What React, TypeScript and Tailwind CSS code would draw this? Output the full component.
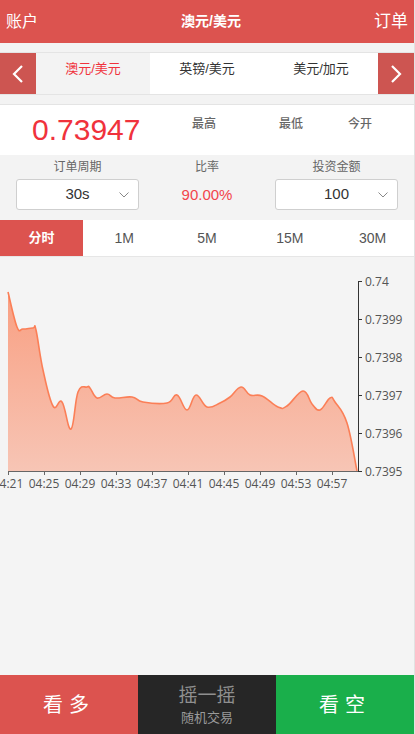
import React from 'react';

const FONT = { fontFamily: '"Liberation Sans", "Noto Sans CJK SC", sans-serif' };

const points: [number, number][] = [
  [8, 292], [17, 327], [23, 329], [33, 328], [36, 330], [43, 370], [53, 406], [62, 402],
  [71, 429], [78, 392], [87, 387], [90, 388], [97, 398], [107, 394], [115, 398], [132, 397],
  [143, 402], [167, 403], [177, 395], [187, 410], [196, 395], [207, 407], [220, 403],
  [230, 397], [241, 387], [250, 395], [262, 396], [278, 407], [287, 406], [303, 391],
  [312, 404], [320, 410], [330, 398], [335, 402], [347, 423], [357, 471],
];

function smoothPath(pts: [number, number][]): string {
  let d = `M${pts[0][0]},${pts[0][1]}`;
  for (let i = 0; i < pts.length - 1; i++) {
    const p0 = pts[i - 1] || pts[i];
    const p1 = pts[i];
    const p2 = pts[i + 1];
    const p3 = pts[i + 2] || p2;
    const t = 0.2;
    const c1x = p1[0] + (p2[0] - p0[0]) * t;
    const c1y = p1[1] + (p2[1] - p0[1]) * t;
    const c2x = p2[0] - (p3[0] - p1[0]) * t;
    const c2y = p2[1] - (p3[1] - p1[1]) * t;
    d += ` C${c1x},${c1y} ${c2x},${c2y} ${p2[0]},${p2[1]}`;
  }
  return d;
}

const yTicks = ['0.74', '0.7399', '0.7398', '0.7397', '0.7396', '0.7395'];
const xTicks = ['04:21', '04:25', '04:29', '04:33', '04:37', '04:41', '04:45', '04:49', '04:53', '04:57'];

function Chart() {
  const line = smoothPath(points);
  const area = `${line} L357,471 L8,471 Z`;
  return (
    <svg width="415" height="418" className="block" style={{ fontFamily: '"Open Sans", "Liberation Sans", sans-serif' }}>
      <defs>
        <linearGradient id="fill" x1="0" y1="281" x2="0" y2="471" gradientUnits="userSpaceOnUse">
          <stop offset="0" stopColor="#f99d7f" />
          <stop offset="1" stopColor="#f7c5b5" />
        </linearGradient>
      </defs>
      <g transform="translate(0,-257)">
        <path d={area} fill="url(#fill)" />
        <path d={line} fill="none" stroke="#fb7f57" strokeWidth="1.6" />
        <line x1="358.5" y1="281" x2="358.5" y2="471" stroke="#333" strokeWidth="1" />
        {yTicks.map((t, i) => (
          <g key={t}>
            <line x1="358" y1={281.5 + i * 38} x2="362" y2={281.5 + i * 38} stroke="#333" />
            <text x="365" y={285.5 + i * 38} fontSize="12" fill="#555">{t}</text>
          </g>
        ))}
        <line x1="8" y1="471.5" x2="358" y2="471.5" stroke="#666" />
        {xTicks.map((t, i) => (
          <g key={t}>
            <line x1={8.5 + i * 36} y1="471" x2={8.5 + i * 36} y2="475" stroke="#666" />
            <text x={8 + i * 36} y="488" fontSize="12" fill="#555" textAnchor="middle">{t}</text>
          </g>
        ))}
      </g>
    </svg>
  );
}

function Chevron({ dir }: { dir: 'left' | 'right' }) {
  return (
    <svg width="12" height="20" viewBox="0 0 12 20" fill="none" stroke="white" strokeWidth="2.2">
      {dir === 'left' ? <path d="M10 2 L2 10 L10 18" /> : <path d="M2 2 L10 10 L2 18" />}
    </svg>
  );
}

function Select({ value }: { value: string }) {
  return (
    <div className="relative mx-auto flex h-[31px] w-[123px] items-center justify-center rounded-[3px] border border-[#cfcfcf] bg-white">
      <span className="text-[15px] text-[#333]">{value}</span>
      <svg className="absolute right-[9px] top-[12px]" width="10" height="6" viewBox="0 0 10 6" fill="none" stroke="#888" strokeWidth="1">
        <path d="M0.5 0.5 L5 5 L9.5 0.5" />
      </svg>
    </div>
  );
}

export default function App() {
  return (
    <div className="flex h-[734px] w-[415px] flex-col overflow-hidden border-r border-[#e2e2e2] bg-[#f3f3f3]" style={FONT}>
      <header className="flex h-[43px] shrink-0 items-center justify-between bg-[#dc534f] px-[6px] text-white">
        <span className="text-[16px]">账户</span>
        <span className="ml-[10px] text-[14px] font-bold">澳元/美元</span>
        <span className="text-[17px]">订单</span>
      </header>

      <div className="mt-[9px] flex h-[43px] shrink-0 border-y border-[#e4e4e4] bg-white">
        <div className="flex w-[36px] items-center justify-center bg-[#cd5551]">
          <Chevron dir="left" />
        </div>
        <div className="w-[114px] bg-[#f3f3f3] pt-[6px] text-center text-[13px] text-[#f0323c]">澳元/美元</div>
        <div className="w-[114px] pt-[6px] text-center text-[13px] text-[#333]">英镑/美元</div>
        <div className="w-[114px] pt-[6px] text-center text-[13px] text-[#333]">美元/加元</div>
        <div className="flex flex-1 items-center justify-center bg-[#cd5551]">
          <Chevron dir="right" />
        </div>
      </div>

      <div className="mt-[9px] flex h-[51px] shrink-0 items-start border-t border-[#e4e4e4] bg-white">
        <div className="w-[192px] pl-[32px] pt-[8px] text-[30px] leading-[34px] text-[#f0323c]">0.73947</div>
        <div className="w-[87px] pt-[10px] text-[12px] font-medium text-[#666]">最高</div>
        <div className="w-[69px] pt-[10px] text-[12px] font-medium text-[#666]">最低</div>
        <div className="pt-[10px] text-[12px] font-medium text-[#666]">今开</div>
      </div>

      <div className="grid h-[65px] shrink-0 grid-cols-[155px_104px_1fr] bg-[#f3f3f3]">
        <div className="flex flex-col pt-[4px]">
          <span className="mb-[4px] text-center text-[12px] leading-[16px] text-[#666]">订单周期</span>
          <Select value="30s" />
        </div>
        <div className="flex flex-col items-center pt-[4px]">
          <span className="text-[12px] leading-[16px] text-[#666]">比率</span>
          <span className="mt-[9px] text-[15px] text-[#f2454b]">90.00%</span>
        </div>
        <div className="flex flex-col pt-[4px]">
          <span className="mb-[4px] text-center text-[12px] leading-[16px] text-[#666]">投资金额</span>
          <Select value="100" />
        </div>
      </div>

      <div className="grid h-[37px] shrink-0 grid-cols-5 border-b border-[#e6e6e6] bg-white text-[14px] text-[#555]">
        <div className="flex items-center justify-center bg-[#dc534f] text-[13px] font-bold text-white">分时</div>
        <div className="flex items-center justify-center">1M</div>
        <div className="flex items-center justify-center">5M</div>
        <div className="flex items-center justify-center">15M</div>
        <div className="flex items-center justify-center">30M</div>
      </div>

      <div className="min-h-0 flex-1 bg-[#f4f4f4]">
        <Chart />
      </div>

      <div className="grid h-[59px] shrink-0 grid-cols-3">
        <div className="flex items-center justify-center bg-[#dc534f] text-[20px] tracking-[6px] text-white">看多</div>
        <div className="flex flex-col items-center justify-center bg-[#262626] leading-none">
          <span className="text-[19px] text-[#8f8f8f]">摇一摇</span>
          <span className="mt-[6px] text-[13px] text-[#9a9a9a]">随机交易</span>
        </div>
        <div className="flex items-center justify-center bg-[#1aaf4b] text-[20px] tracking-[6px] text-white">看空</div>
      </div>
    </div>
  );
}
